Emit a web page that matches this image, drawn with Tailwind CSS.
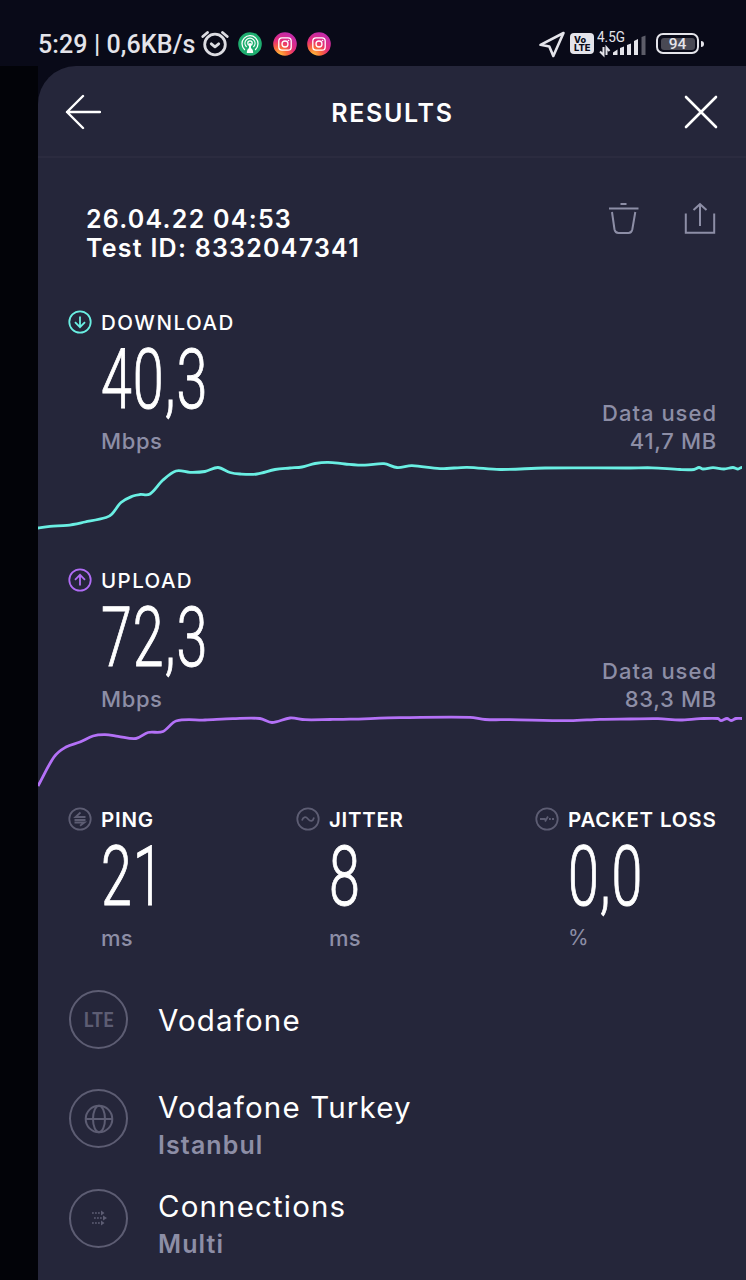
<!DOCTYPE html>
<html lang="en">
<head>
  <meta charset="UTF-8" />
  <title>Results</title>
  <script src="https://cdn.jsdelivr.net/npm/@tailwindcss/browser@4"></script>
</head>
<body class="h-[1280px] w-[746px] overflow-hidden bg-[#090a18] font-['Inter',sans-serif] text-white">

  <!-- Status bar -->
  <div class="flex h-[66px] items-center pt-[21px] pl-[38px] font-['Roboto',sans-serif] text-[#e4e4ea]">
    <span class="w-[163px] pt-[2px] text-[25px] leading-[44px] font-medium tracking-[0.1px] whitespace-nowrap">5:29 | 0,6KB/s</span>
    <svg class="h-7 w-7 shrink-0" viewBox="0 0 28 28" fill="none" stroke="#dcdce2" stroke-width="2.8" stroke-linecap="round" stroke-linejoin="round">
      <circle cx="14" cy="14.5" r="10.3" />
      <path d="M1.8 6.5 6.5 2.5M26.2 6.5 21.5 2.5M10.3 13.8 14 16.8 17.7 13.8" />
    </svg>
    <svg class="ml-[9px] h-6 w-6 shrink-0" viewBox="0 0 24 24" fill="none" stroke="#fff" stroke-width="1.3" stroke-linecap="round">
      <circle cx="12" cy="12" r="11.8" fill="#1fae70" stroke="none" />
      <path d="M6.5 17.5A8 8 0 1 1 17.5 17.5M8.3 14.6A5 5 0 1 1 15.7 14.6" />
      <circle cx="12" cy="11" r="2.2" />
      <path d="M12 12v5" stroke-width="2" />
      <path d="M8.8 21c0-3.5 1.4-5 3.2-5s3.2 1.5 3.2 5z" fill="#fff" stroke="none" />
    </svg>
    <svg class="ml-[11px] h-6 w-6 shrink-0" viewBox="0 0 24 24" fill="none" stroke="#fff" stroke-width="1.3">
      <defs>
        <radialGradient id="insta" cx="0.25" cy="1" r="1">
          <stop offset="0" stop-color="#ffc83d" />
          <stop offset="0.35" stop-color="#fb6a3a" />
          <stop offset="0.65" stop-color="#e52d78" />
          <stop offset="1" stop-color="#c62ba8" />
        </radialGradient>
      </defs>
      <circle cx="12" cy="12" r="11.8" fill="url(#insta)" stroke="none" />
      <rect x="5.8" y="5.8" width="12.4" height="12.4" rx="3.2" />
      <circle cx="12" cy="12" r="3" />
      <circle cx="15.5" cy="8.5" r="0.8" fill="#fff" stroke="none" />
    </svg>
    <svg class="ml-[10px] h-6 w-6 shrink-0" viewBox="0 0 24 24" fill="none" stroke="#fff" stroke-width="1.3">
      <circle cx="12" cy="12" r="11.8" fill="url(#insta)" stroke="none" />
      <rect x="5.8" y="5.8" width="12.4" height="12.4" rx="3.2" />
      <circle cx="12" cy="12" r="3" />
      <circle cx="15.5" cy="8.5" r="0.8" fill="#fff" stroke="none" />
    </svg>

    <div class="ml-auto flex shrink-0 items-center pr-[42px]">
      <svg class="h-7 w-7" viewBox="0 0 28 28" fill="none" stroke="#e4e4ea" stroke-width="2.6" stroke-linejoin="round">
        <path d="M25.500 3 2.500 14.800 11.300 16.500 15.300 26z" />
      </svg>
      <svg class="ml-[4px] h-[21px] w-6" viewBox="0 0 24 21" font-family="Inter" font-weight="800" fill="#0b0c1a">
        <rect width="24" height="21" rx="4" fill="#e4e4ea" />
        <text x="4" y="9.500" font-size="9" textLength="12" lengthAdjust="spacingAndGlyphs">Vo</text>
        <text x="4" y="18" font-size="9" textLength="16.500" lengthAdjust="spacingAndGlyphs">LTE</text>
      </svg>
      <svg class="ml-[3px] h-7 w-[50px]" viewBox="0 0 50 28">
        <text x="0" y="12" font-family="Roboto" font-size="14.5" textLength="28" lengthAdjust="spacingAndGlyphs" fill="#e4e4ea">4.5G</text>
        <path d="M6.500 17v8L3 21.500M9.500 25v-7.500l3 3.500" fill="none" stroke="#e4e4ea" stroke-width="2" />
        <path d="M16 25v-2.500l4.500-3v5.500zM23 25v-7l4-1.500v8.500zM30 25v-10l4-1.500v11.500zM37 25v-14l4-2v16z" fill="#e4e4ea" />
        <path d="M44.500 25v-18l4-1.500v19.500z" fill="#5d5d69" />
      </svg>
      <div class="ml-[9px] flex h-[21px] w-[43px] rounded-[7px] border-2 border-[#e4e4ea] p-[2.5px]">
        <span class="flex-1 rounded-[3px] bg-[#494954] text-center text-[15.5px] leading-[13px] font-medium">94</span>
      </div>
      <span class="ml-[2px] h-[6px] w-[3px] rounded-r-full bg-[#e4e4ea]"></span>
    </div>
  </div>

  <!-- Page -->
  <div class="flex h-[1214px]">
    <div class="w-[38px] shrink-0 bg-[#020308]"></div>

    <main class="w-[708px] shrink-0 rounded-tl-[38px] bg-[#25263a]">
      <header class="flex h-[92px] items-center justify-between border-b-2 border-[#2b2b3f] px-[27px] pt-[2px]">
        <svg class="h-9 w-9" viewBox="0 0 36 36" fill="none" stroke="#fff" stroke-width="2.4" stroke-linecap="round" stroke-linejoin="round">
          <path d="M18 2 2 18 18 34M2 18h33" />
        </svg>
        <h1 class="pt-[3px] pl-[1px] text-[25px] font-semibold tracking-[1.7px]">RESULTS</h1>
        <svg class="h-9 w-9" viewBox="0 0 36 36" fill="none" stroke="#fff" stroke-width="2.6" stroke-linecap="round">
          <path d="M3 3 33 33M33 3 3 33" />
        </svg>
      </header>

      <!-- Test info -->
      <div class="mt-[47px] flex justify-between pr-[30px] pl-[48px]">
        <div class="text-[25px] leading-[29px] font-semibold tracking-[1.25px] whitespace-nowrap">
          <p>26.04.22 04:53</p>
          <p>Test ID: 8332047341</p>
        </div>
        <div class="flex gap-[44px]">
          <svg class="mt-[-4px] h-9 w-8" viewBox="0 0 32 36" fill="none" stroke="#8d8ea6" stroke-width="2">
            <path d="M12.500 3h6" />
            <path d="M1 7.500h29.500" />
            <path d="M4 11 6.500 28.500Q7.300 32 10.500 32h10Q23.500 32 24.300 28.500L27.300 11" />
          </svg>
          <svg class="mt-[-4px] h-9 w-8" viewBox="0 0 32 36" fill="none" stroke="#8d8ea6" stroke-width="2">
            <path d="M1.800 12.500v19.300h28.400v-19.300" />
            <path d="M16 25V4M9.500 9 16 3.200 22.500 9" />
          </svg>
        </div>
      </div>

      <!-- Download -->
      <section class="mt-[48px]">
        <div class="flex h-6 items-center gap-[9px] pl-[30px]">
          <svg class="-mt-[2px] h-6 w-6" viewBox="0 0 24 24" fill="none" stroke="#6aefe3" stroke-width="1.8">
            <circle cx="12" cy="12" r="10.7" />
            <path d="M12 6.500v10.500M7 12.200 12 17.200 17 12.200" />
          </svg>
          <h2 class="text-[20.5px] font-medium tracking-[1.5px]">DOWNLOAD</h2>
        </div>
        <div class="flex h-[120px] items-end justify-between pr-[29px] pl-[63px] text-[22px] leading-7 font-medium text-[#8d8ea6]">
          <div>
            <p class="mb-[2px] origin-left scale-x-[0.67] font-['Roboto',sans-serif] text-[83px] leading-[90px] font-light tracking-[1.5px] text-white [-webkit-text-stroke:1px_#fff]">40,3</p>
            <p class="tracking-[0.6px]">Mbps</p>
          </div>
          <div class="text-right">
            <p class="tracking-[1px]">Data used</p>
            <p class="tracking-[0.7px]">41,7 MB</p>
          </div>
        </div>
        <svg class="h-[114px] w-[708px]" viewBox="38 455 708 114" fill="none" stroke="#6aefe3" stroke-width="2.8">
          <path id="download-line" />
        </svg>
      </section>

      <!-- Upload -->
      <section>
        <div class="flex h-6 items-center gap-[9px] pl-[30px]">
          <svg class="-mt-[2px] h-6 w-6" viewBox="0 0 24 24" fill="none" stroke="#b06cf5" stroke-width="1.8">
            <circle cx="12" cy="12" r="10.7" />
            <path d="M12 17.500v-10.500M7 11.800 12 6.800 17 11.800" />
          </svg>
          <h2 class="text-[20.5px] font-medium tracking-[1.4px]">UPLOAD</h2>
        </div>
        <div class="flex h-[120px] items-end justify-between pr-[29px] pl-[63px] text-[22px] leading-7 font-medium text-[#8d8ea6]">
          <div>
            <p class="mb-[2px] origin-left scale-x-[0.67] font-['Roboto',sans-serif] text-[83px] leading-[90px] font-light tracking-[1.5px] text-white [-webkit-text-stroke:1px_#fff]">72,3</p>
            <p class="tracking-[0.6px]">Mbps</p>
          </div>
          <div class="text-right">
            <p class="tracking-[1px]">Data used</p>
            <p class="tracking-[0.7px]">83,3 MB</p>
          </div>
        </div>
        <svg class="h-[95px] w-[708px]" viewBox="38 713 708 95" fill="none" stroke="#b471f7" stroke-width="2.8">
          <path id="upload-line" />
        </svg>
      </section>

      <!-- Ping / jitter / packet loss -->
      <section class="grid h-[162px] grid-cols-[228px_239px_1fr] pl-[30px]">
        <div>
          <div class="flex h-6 items-center gap-[9px]">
            <svg class="-mt-[2px] h-6 w-6" viewBox="0 0 24 24" fill="none" stroke="#5d5d73" stroke-width="1.8">
              <circle cx="12" cy="12" r="10.7" />
              <path d="M17.500 10H7.500L12.500 5.500M6.500 13h11M6.500 15.500h10L12 18.800" />
            </svg>
            <h2 class="text-[20.5px] font-semibold tracking-[0.8px]">PING</h2>
          </div>
          <div class="pl-[33px]">
            <p class="mb-[2px] origin-left scale-x-[0.67] font-['Roboto',sans-serif] text-[83px] leading-[90px] font-light tracking-[1.5px] [-webkit-text-stroke:1px_#fff]">21</p>
            <p class="text-[22px] leading-7 font-medium tracking-[0.3px] text-[#8d8ea6]">ms</p>
          </div>
        </div>
        <div>
          <div class="flex h-6 items-center gap-[9px]">
            <svg class="-mt-[2px] h-6 w-6" viewBox="0 0 24 24" fill="none" stroke="#5d5d73" stroke-width="1.8">
              <circle cx="12" cy="12" r="10.7" />
              <path d="M6 13.500C7 10 9.500 9 12 12S17 14.500 18 10.500" />
            </svg>
            <h2 class="text-[20.5px] font-semibold tracking-[0.7px]">JITTER</h2>
          </div>
          <div class="pl-[33px]">
            <p class="mb-[2px] origin-left scale-x-[0.67] font-['Roboto',sans-serif] text-[83px] leading-[90px] font-light tracking-[1.5px] [-webkit-text-stroke:1px_#fff]">8</p>
            <p class="text-[22px] leading-7 font-medium tracking-[0.3px] text-[#8d8ea6]">ms</p>
          </div>
        </div>
        <div>
          <div class="flex h-6 items-center gap-[9px]">
            <svg class="-mt-[2px] h-6 w-6" viewBox="0 0 24 24" fill="none" stroke="#5d5d73" stroke-width="1.8">
              <circle cx="12" cy="12" r="10.7" />
              <path d="M5 12h5.500M10 14.500 13 9.500M14 12h1.800M17 12h2" />
            </svg>
            <h2 class="text-[20.5px] font-semibold tracking-[0.8px] whitespace-nowrap">PACKET LOSS</h2>
          </div>
          <div class="pl-[33px]">
            <p class="mb-[2px] origin-left scale-x-[0.67] font-['Roboto',sans-serif] text-[83px] leading-[90px] font-light tracking-[1.5px] [-webkit-text-stroke:1px_#fff]">0,0</p>
            <p class="text-[21px] leading-7 text-[#8d8ea6]">%</p>
          </div>
        </div>
      </section>

      <!-- Connection details -->
      <section class="pl-[31px] text-[29.5px] leading-[38px] tracking-[1.15px] whitespace-nowrap">
        <div class="flex h-[99px] items-center gap-[30px]">
          <div class="flex h-[59px] w-[59px] items-center justify-center rounded-full border-2 border-[#5d5d73] text-[#5d5d73]">
            <span class="scale-x-[0.88] font-['Roboto',sans-serif] text-[20px] font-bold tracking-[0.5px]">LTE</span>
          </div>
          <p>Vodafone</p>
        </div>
        <div class="flex h-[99px] items-center gap-[30px]">
          <div class="flex h-[59px] w-[59px] items-center justify-center rounded-full border-2 border-[#5d5d73]">
            <svg class="h-[30px] w-[30px]" viewBox="0 0 30 30" fill="none" stroke="#5d5d73" stroke-width="2">
              <circle cx="15" cy="15" r="13.3" />
              <ellipse cx="15" cy="15" rx="6" ry="13.3" />
              <path d="M1.700 15h26.600" />
            </svg>
          </div>
          <div class="pt-[14px]">
            <p>Vodafone Turkey</p>
            <p class="text-[25px] font-semibold tracking-[1.1px] text-[#8d8ea6]">Istanbul</p>
          </div>
        </div>
        <div class="flex h-[100px] items-center gap-[30px]">
          <div class="flex h-[59px] w-[59px] items-center justify-center rounded-full border-2 border-[#5d5d73]">
            <svg class="h-4 w-4" viewBox="0 0 16 16" fill="none" stroke="#5d5d73" stroke-width="1.4">
              <path d="M1 3h9M3 8h9M1 13h9" stroke-dasharray="1.8 1.2" />
              <path d="M10 .5 13.500 3 10 5.500zM12 5.500 16 8 12 10.500zM10 10.500 13.500 13 10 15.500z" fill="#5d5d73" stroke="none" />
            </svg>
          </div>
          <div class="pt-[13px]">
            <p>Connections</p>
            <p class="text-[25px] font-semibold tracking-[1.1px] text-[#8d8ea6]">Multi</p>
          </div>
        </div>
      </section>
    </main>
  </div>

  <!-- Script -->
  <script>
    const download = [
      [36, 528.3], [50, 526.3], [67, 525.3], [85, 522], [106, 517.5], [112, 514], [121, 502.5], [133, 496], [140, 494.5], [150, 494],
      [163, 480], [176, 471], [190, 472.3], [205, 471.5], [218, 467.5], [230, 472.5], [240, 474], [257, 474], [275, 469.5],
      [290, 468], [302, 467], [315, 463.5], [328, 462.3], [345, 464], [365, 465.2], [384, 463.7], [397, 467.5], [412, 465.7],
      [440, 468.7], [467, 467.3], [500, 469.5], [545, 468], [630, 468], [652, 467.8], [680, 469.5], [694, 469.5],
      [699, 467.5], [703, 469], [713, 467.7], [724, 469], [733, 467.5], [738, 469], [742, 467.3]
    ];
    const upload = [
      [38, 786], [54, 757], [66, 747], [80, 742], [93, 736], [105, 734.7], [118, 736.3], [136, 738.5], [148, 732.5],
      [163, 731.5], [176, 721], [205, 720], [233, 718.7], [260, 718.5], [272, 722.5], [290, 718], [305, 719.7], [330, 719.5],
      [350, 719.2], [400, 717.7], [470, 717.3], [485, 719.5], [510, 719.7], [570, 720.7], [600, 719.3], [630, 719],
      [658, 718.7], [680, 720], [700, 718.7], [718, 718.5], [721, 720.7], [727, 718.5], [731, 720.5], [736, 718.5], [742, 718.5]
    ];

    // Smooth line through all points
    function linePath(points) {
      let d = "M" + points[0];
      for (let i = 0; i < points.length - 1; i++) {
        const p0 = points[i - 1] || points[i];
        const p1 = points[i];
        const p2 = points[i + 1];
        const p3 = points[i + 2] || p2;
        const dx = (p2[0] - p1[0]) / 3;
        const s1 = (p2[1] - p0[1]) / (p2[0] - p0[0]);
        const s2 = p3 === p2 ? 0 : (p3[1] - p1[1]) / (p3[0] - p1[0]);
        d += " C" + [p1[0] + dx, p1[1] + s1 * dx, p2[0] - dx, p2[1] - s2 * dx, p2[0], p2[1]];
      }
      return d;
    }

    document.getElementById("download-line").setAttribute("d", linePath(download));
    document.getElementById("upload-line").setAttribute("d", linePath(upload));
  </script>
</body>
</html>
